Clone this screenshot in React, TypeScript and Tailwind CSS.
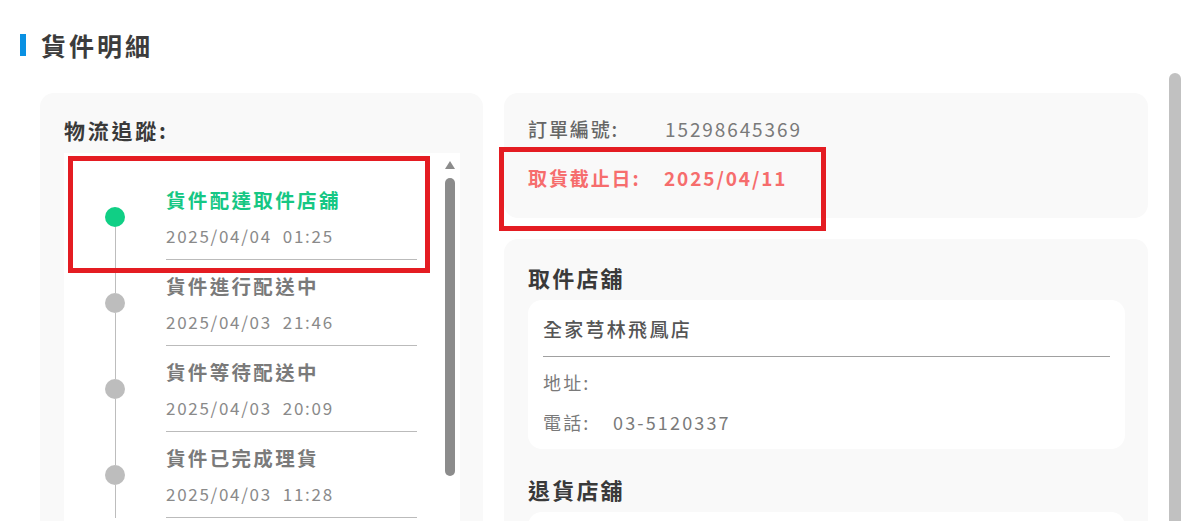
import React from 'react';

type TrackItem = {
  title: string;
  time: string;
  active?: boolean;
};

const tracks: TrackItem[] = [
  { title: '貨件配達取件店舖', time: '2025/04/04  01:25', active: true },
  { title: '貨件進行配送中', time: '2025/04/03  21:46' },
  { title: '貨件等待配送中', time: '2025/04/03  20:09' },
  { title: '貨件已完成理貨', time: '2025/04/03  11:28' },
];

const font = "font-['Noto_Sans_CJK_TC','Noto_Sans',sans-serif]";

const TrackRow = ({ item, first }: { item: TrackItem; first: boolean }) => (
  <div className="flex h-[86px]">
    <div className="w-[102px] flex flex-col items-center">
      <div className={`w-px flex-1 ${first ? 'bg-transparent' : 'bg-[#bdbdbd]'}`} />
      <div className={`w-[20px] h-[20px] rounded-full shrink-0 ${item.active ? 'bg-[#10cf85]' : 'bg-[#bdbdbd]'}`} />
      <div className="w-px flex-1 bg-[#bdbdbd]" />
    </div>
    <div className="w-[251px] border-b border-[#bbbbbb] pt-[12px]">
      <div
        className={`text-[19.5px] leading-[28px] tracking-[0.12em] font-semibold ${
          item.active ? 'text-[#16c784]' : 'text-[#7a7a7a]'
        }`}
      >
        {item.title}
      </div>
      <div className="mt-[10px] text-[17px] leading-[24px] tracking-[0.1em] text-[#8a8a8a] whitespace-pre">
        {item.time}
      </div>
    </div>
  </div>
);

const StoreCard = ({ name, address, phone }: { name: string; address: string; phone: string }) => (
  <div className="bg-white rounded-[14px] px-[15px] pt-[15px] pb-[13px]">
    <div className="text-[19px] leading-[28px] tracking-[0.12em] font-medium text-[#555] pb-[13px] border-b border-[#a0a0a0]">
      {name}
    </div>
    <div className="mt-[11px] flex flex-col gap-[12px] text-[18px] leading-[28px] tracking-[0.12em] text-[#7a7a7a]">
      <div>地址: {address}</div>
      <div className="flex">
        <span className="w-[70px]">電話:</span>
        <span>{phone}</span>
      </div>
    </div>
  </div>
);

export default function App() {
  return (
    <div className={`relative flex h-[521px] overflow-hidden bg-white ${font}`}>
      <div className="flex-1 min-w-0">
        <div className="flex items-center pl-[20px] pt-[31px]">
          <div className="w-[6px] h-[22px] bg-[#0a91e3]" />
          <h1 className="ml-[15px] text-[25px] leading-[28px] tracking-[0.12em] font-semibold text-[#3c3c3c]">
            貨件明細
          </h1>
        </div>

        <div className="flex gap-[21px] pl-[40px] mt-[34px]">
          {/* 物流追蹤 */}
          <div className="w-[443px] shrink-0 bg-[#f9f9f9] rounded-[14px] pl-[24px] pr-[23px] pt-[23px] pb-[24px]">
            <div className="text-[21px] leading-[28px] tracking-[0.13em] font-semibold text-[#3a3a3a] mb-[9px]">
              物流追蹤:
            </div>
            <div className="flex bg-white h-[420px] overflow-hidden">
              <div className="w-[353px] pt-[21px]">
                {tracks.map((t, i) => (
                  <TrackRow key={t.time} item={t} first={i === 0} />
                ))}
              </div>
              <div className="ml-auto mr-[5px] w-[10px] flex flex-col items-center pt-[8px]">
                <div className="w-0 h-0 border-l-[5px] border-r-[5px] border-b-[8px] border-l-transparent border-r-transparent border-b-[#8c8c8c]" />
                <div className="mt-[9px] w-[10px] h-[298px] rounded-full bg-[#8c8c8c]" />
              </div>
            </div>
          </div>

          {/* 訂單資訊 */}
          <div className="w-[644px] shrink-0 flex flex-col gap-[21px]">
            <div className="h-[125px] bg-[#f9f9f9] rounded-[14px] pl-[24px] pt-[22px] flex flex-col gap-[21px]">
              <div className="flex text-[19px] leading-[28px] tracking-[0.1em]">
                <span className="w-[137px] font-medium text-[#666]">訂單編號:</span>
                <span className="text-[#7a7a7a]">15298645369</span>
              </div>
              <div className="flex text-[19px] leading-[28px] tracking-[0.1em] font-semibold text-[#f66d6d]">
                <span className="w-[136px]">取貨截止日:</span>
                <span>2025/04/11</span>
              </div>
            </div>

            <div className="bg-[#f9f9f9] rounded-[14px] px-[24px] pr-[23px] pt-[23px] pb-[24px]">
              <div className="text-[22px] leading-[30px] tracking-[0.1em] font-semibold text-[#3a3a3a] mb-[8px]">
                取件店舖
              </div>
              <StoreCard name="全家芎林飛鳳店" address="" phone="03-5120337" />
              <div className="mt-[25px] text-[22px] leading-[30px] tracking-[0.1em] font-semibold text-[#3a3a3a] mb-[8px]">
                退貨店舖
              </div>
              <StoreCard name="全家竹北博愛店" address="" phone="03-5551234" />
            </div>
          </div>
        </div>
      </div>

      {/* page scrollbar */}
      <div className="w-[12px] mr-[6px] pt-[73px] flex flex-col">
        <div className="flex-1 bg-[#c1c1c1] rounded-t-full" />
      </div>

      {/* annotation boxes */}
      <div className="absolute left-[68px] top-[156px] w-[362px] h-[117px] border-[5px] border-[#e41c22]" />
      <div className="absolute left-[499px] top-[147px] w-[327px] h-[84px] border-[5px] border-[#e41c22]" />
    </div>
  );
}
